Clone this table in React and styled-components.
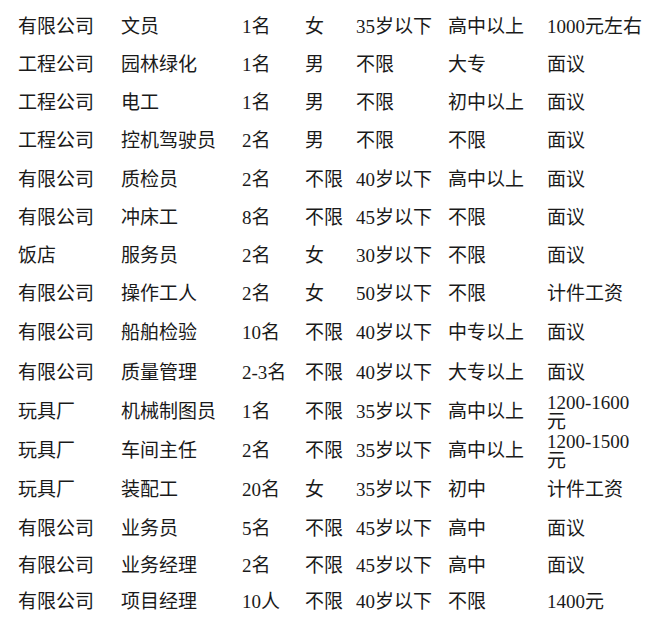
import React from 'react';
import styled, { createGlobalStyle } from 'styled-components';

const GlobalStyle = createGlobalStyle`
  html, body {
    margin: 0;
    padding: 0;
    background: #fff;
  }
`;

const rows = [
  ['有限公司', '文员', '1名', '女', '35岁以下', '高中以上', '1000元左右'],
  ['工程公司', '园林绿化', '1名', '男', '不限', '大专', '面议'],
  ['工程公司', '电工', '1名', '男', '不限', '初中以上', '面议'],
  ['工程公司', '控机驾驶员', '2名', '男', '不限', '不限', '面议'],
  ['有限公司', '质检员', '2名', '不限', '40岁以下', '高中以上', '面议'],
  ['有限公司', '冲床工', '8名', '不限', '45岁以下', '不限', '面议'],
  ['饭店', '服务员', '2名', '女', '30岁以下', '不限', '面议'],
  ['有限公司', '操作工人', '2名', '女', '50岁以下', '不限', '计件工资'],
  ['有限公司', '船舶检验', '10名', '不限', '40岁以下', '中专以上', '面议'],
  ['有限公司', '质量管理', '2-3名', '不限', '40岁以下', '大专以上', '面议'],
  ['玩具厂', '机械制图员', '1名', '不限', '35岁以下', '高中以上', '1200-1600元'],
  ['玩具厂', '车间主任', '2名', '不限', '35岁以下', '高中以上', '1200-1500元'],
  ['玩具厂', '装配工', '20名', '女', '35岁以下', '初中', '计件工资'],
  ['有限公司', '业务员', '5名', '不限', '45岁以下', '高中', '面议'],
  ['有限公司', '业务经理', '2名', '不限', '45岁以下', '高中', '面议'],
  ['有限公司', '项目经理', '10人', '不限', '40岁以下', '不限', '1400元'],
];

const rowHeights = [38.5, 38, 38, 38.5, 38, 38.5, 38, 38, 39.5, 40, 39, 39, 39.5, 38, 36, 35];

const Table = styled.div`
  display: grid;
  grid-template-columns: 103px 121px 63px 51px 92px 99px 98px;
  grid-template-rows: ${(p) => p.$rows.map((h) => h + 'px').join(' ')};
  padding: 7px 0 0 18px;
  font-family: "Liberation Serif", "Noto Sans CJK SC", serif;
  font-size: 19px;
  line-height: 19px;
  color: #1a1a1a;
`;

const Cell = styled.div`
  display: flex;
  align-items: center;
  white-space: ${(p) => (p.$wrap ? 'normal' : 'nowrap')};
`;

export default function App() {
  return (
    <>
      <GlobalStyle />
      <Table $rows={rowHeights}>
        {rows.map((row, i) =>
          row.map((text, j) => (
            <Cell key={i + '-' + j} $wrap={j === 6}>
              {text}
            </Cell>
          ))
        )}
      </Table>
    </>
  );
}
